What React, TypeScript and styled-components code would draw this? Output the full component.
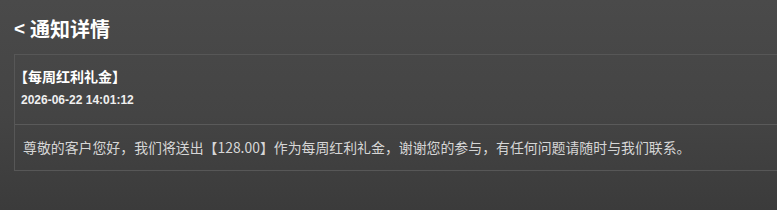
import React from "react";
import styled, { createGlobalStyle } from "styled-components";

const GlobalStyle = createGlobalStyle`
  html, body {
    margin: 0;
    padding: 0;
    height: 100%;
  }
  body {
    background: linear-gradient(180deg, #4a4a4a 0%, #444444 55%, #3b3b3b 100%);
    font-family: "Noto Sans CJK SC", "Noto Sans", sans-serif;
    overflow: hidden;
  }
  #root {
    min-height: 210px;
  }
`;

const Page = styled.div`
  padding: 14px 0 0 14px;
  height: 210px;
  box-sizing: border-box;
`;

const Header = styled.h1`
  margin: 0;
  color: #ffffff;
  font-size: 20px;
  font-weight: 700;
  line-height: 30px;
  display: flex;
  align-items: center;
  gap: 5px;
`;

const Back = styled.span`
  font-family: "Liberation Sans", "Noto Sans CJK SC", sans-serif;
  font-size: 19px;
`;

const Card = styled.div`
  margin-top: 10px;
  border: 1px solid #575757;
  border-right: none;
`;

const Section = styled.div<{ $pad: number }>`
  padding: 0 ${(p) => p.$pad}px;
  & + & {
    border-top: 1px solid #5a5a5a;
  }
`;

const Title = styled.div`
  color: #ffffff;
  font-size: 14px;
  font-weight: 700;
  line-height: 20px;
  padding-top: 11px;
  font-feature-settings: "halt";
`;

const DateLine = styled.div`
  color: #f0f0f0;
  font-family: "Liberation Sans", "Noto Sans CJK SC", sans-serif;
  font-size: 12px;
  font-weight: 700;
  line-height: 18px;
  padding: 5px 0 15px;
`;

const Body = styled.p`
  margin: 0;
  color: #d6d6d6;
  font-size: 13.9px;
  line-height: 20px;
  padding: 12px 0 13px;
`;

export default function App() {
  return (
    <>
      <GlobalStyle />
      <Page>
        <Header>
          <Back>&lt;</Back>
          <span>通知详情</span>
        </Header>
        <Card>
          <Section $pad={6}>
            <Title>【每周红利礼金】</Title>
            <DateLine>2026-06-22 14:01:12</DateLine>
          </Section>
          <Section $pad={8}>
            <Body>
              尊敬的客户您好，我们将送出【128.00】作为每周红利礼金，谢谢您的参与，有任何问题请随时与我们联系。
            </Body>
          </Section>
        </Card>
      </Page>
    </>
  );
}
